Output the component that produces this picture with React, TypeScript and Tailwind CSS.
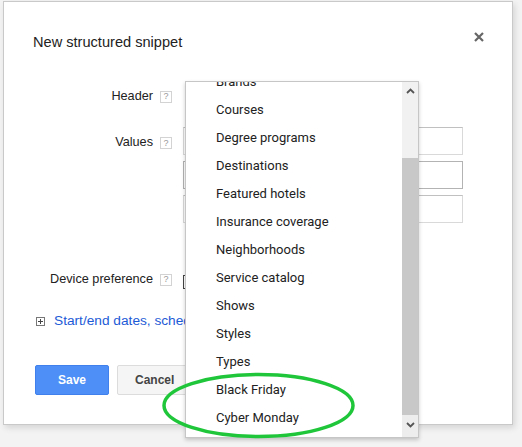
const headerTypes = [
  "Brands",
  "Courses",
  "Degree programs",
  "Destinations",
  "Featured hotels",
  "Insurance coverage",
  "Neighborhoods",
  "Service catalog",
  "Shows",
  "Styles",
  "Types",
  "Black Friday",
  "Cyber Monday",
];

function HelpIcon({ className = "" }: { className?: string }) {
  return (
    <span
      className={`flex h-[12px] w-[12px] shrink-0 items-center justify-center border border-[#d3d3d3] text-[9px] leading-none text-[#999] ${className}`}
    >
      ?
    </span>
  );
}

function Label({ children }: { children: React.ReactNode }) {
  return (
    <div className="flex h-[28px] w-[149px] shrink-0 items-center justify-end pt-[3px] text-[12.7px] text-[#222]">
      {children}
    </div>
  );
}

function Chevron({ up }: { up?: boolean }) {
  return (
    <svg width="9" height="6" viewBox="0 0 9 6" fill="none">
      <polyline
        points={up ? "1,5 4.5,1.5 8,5" : "1,1 4.5,4.5 8,1"}
        stroke="#555"
        strokeWidth="1.8"
      />
    </svg>
  );
}

export default function App() {
  return (
    <div className="relative h-[447px] w-[522px] overflow-hidden bg-[#f3f3f3] font-['Liberation_Sans',Arial,sans-serif]">
      {/* dialog */}
      <div className="ml-[3px] mt-[1px] flex h-[424px] w-[510px] flex-col border border-[#c9c9c9] bg-white shadow-[2px_3px_6px_rgba(0,0,0,0.12)]">
        <div className="flex items-start justify-between pl-[29px] pr-[28px] pt-[31px]">
          <h2 className="text-[14.6px] leading-[18px] text-[#222]">New structured snippet</h2>
          <button className="-mt-px">
            <svg width="10" height="10" viewBox="0 0 10 10">
              <path d="M1 1L9 9M9 1L1 9" stroke="#666" strokeWidth="2.2" />
            </svg>
          </button>
        </div>

        <div className="mt-[30px] flex items-center">
          <Label>Header</Label>
          <HelpIcon className="ml-[7px] mt-[3px]" />
          <div className="ml-[13px] h-[28px] w-[200px] border border-[#d9d9d9]" />
        </div>

        <div className="mt-[18px] flex items-start">
          <Label>Values</Label>
          <HelpIcon className="ml-[7px] mt-[10px]" />
          <div className="ml-[11px] flex w-[280px] flex-col gap-[6px]">
            <div className="h-[28px] border border-[#d9d9d9] border-t-[#c0c0c0]" />
            <div className="h-[28px] border border-[#b3b3b3]" />
            <div className="h-[28px] border border-[#d9d9d9] border-t-[#c0c0c0]" />
          </div>
        </div>

        <div className="mt-[41px] flex items-center">
          <Label>Device preference</Label>
          <HelpIcon className="ml-[7px] mt-[3px]" />
          <div className="ml-[11px] mt-[7px] h-[14px] w-[120px] border border-[#444]" />
        </div>

        <div className="mt-[20px] flex h-[18px] items-center pl-[32px]">
          <svg width="9" height="9" viewBox="0 0 9 9" className="shrink-0">
            <rect x="0.5" y="0.5" width="8" height="8" fill="white" stroke="#777" />
            <path d="M2 4.5H7M4.5 2V7" stroke="#444" />
          </svg>
          <a className="ml-[9px] w-[131px] overflow-hidden whitespace-nowrap text-[13.7px] text-[#1c5ad6]">
            Start/end dates, scheduling and device preference
          </a>
        </div>

        <div className="mt-[35px] flex gap-[8px] pl-[31px]">
          <button className="h-[30px] w-[74px] rounded-[2px] border border-[#3f80ec] bg-[#4d8ff6] text-[12px] font-bold text-white">
            Save
          </button>
          <button className="h-[30px] w-[90px] rounded-[2px] border border-[#dcdcdc] bg-[#f5f5f5] pl-[17px] text-left text-[12px] font-bold text-[#444]">
            Cancel
          </button>
        </div>
      </div>

      {/* open header menu */}
      <div className="absolute left-[185px] top-[81px] flex h-[357px] w-[234px] border border-[#c6c6c6] bg-white shadow-[0_2px_4px_rgba(0,0,0,0.2)]">
        <div className="flex-1 overflow-hidden">
          <ul className="-mt-[14px] font-['Roboto',Arial,sans-serif] text-[13px] text-[#222]">
            {headerTypes.map((t) => (
              <li key={t} className="flex h-[28px] items-center pl-[30px]">
                {t}
              </li>
            ))}
          </ul>
        </div>
        <div className="flex w-[16px] flex-col bg-[#f1f1f1]">
          <div className="flex h-[17px] items-center justify-center pt-[1px]">
            <Chevron up />
          </div>
          <div className="h-[59px]" />
          <div className="h-[257px] bg-[#c8c8c8]" />
          <div className="flex h-[22px] items-center justify-center bg-[#ededed] pb-[3px]">
            <Chevron />
          </div>
        </div>
      </div>

      {/* highlight ring */}
      <svg className="absolute left-[161px] top-[372px]" width="196" height="68" viewBox="0 0 196 68">
        <ellipse cx="97.5" cy="33.5" rx="94.5" ry="31" fill="none" stroke="#1fc63a" strokeWidth="3.5" />
      </svg>
    </div>
  );
}
